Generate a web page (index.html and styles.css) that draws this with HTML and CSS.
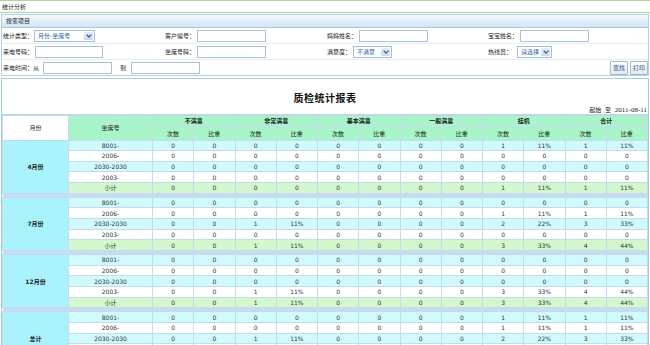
FILE: index.html
```html
<!DOCTYPE html>
<html lang="zh-CN">
<head>
<meta charset="utf-8">
<title>统计分析</title>
<link rel="stylesheet" href="styles.css">
</head>
<body>
<div class="page-title">统计分析</div>

<div class="search">
  <div class="search-head">搜索项目</div>
  <div class="search-grid">
    <div class="field"><span class="lbl">统计类型：</span><div class="sel sel-type"><span class="sel-val">月份-坐席号</span><span class="sel-arrow"><svg width="6" height="4" viewBox="0 0 6 4"><polyline points="0.6,0.6 3,3 5.4,0.6" fill="none" stroke="#3d5e9c" stroke-width="1.3"/></svg></span></div></div>
    <div class="field"><span class="lbl">客户编号：</span><input class="inp" type="text"></div>
    <div class="field"><span class="lbl">妈妈姓名：</span><input class="inp" type="text"></div>
    <div class="field"><span class="lbl">宝宝姓名：</span><input class="inp" type="text"></div>

    <div class="field"><span class="lbl">来电号码：</span><input class="inp inp-phone" type="text"></div>
    <div class="field"><span class="lbl">坐席号码：</span><input class="inp" type="text"></div>
    <div class="field"><span class="lbl">满意度：</span><div class="sel sel-sat"><span class="sel-val">不满意</span><span class="sel-arrow"><svg width="6" height="4" viewBox="0 0 6 4"><polyline points="0.6,0.6 3,3 5.4,0.6" fill="none" stroke="#3d5e9c" stroke-width="1.3"/></svg></span></div></div>
    <div class="field"><span class="lbl">热线员：</span><div class="sel sel-op"><span class="sel-val">请选择</span><span class="sel-arrow"><svg width="6" height="4" viewBox="0 0 6 4"><polyline points="0.6,0.6 3,3 5.4,0.6" fill="none" stroke="#3d5e9c" stroke-width="1.3"/></svg></span></div></div>
  </div>
  <div class="search-row3">
    <div class="field"><span class="lbl">来电时间：从</span><input class="inp inp-from" type="text"><span class="lbl lbl-to">到</span><input class="inp" type="text"></div>
    <div class="btns"><button class="btn btn-find">查找</button><button class="btn">打印</button></div>
  </div>
</div>

<div class="report">
  <div class="report-title">质检统计报表</div>
  <div class="report-date">起始&nbsp; 至&nbsp; <span class="date">2011-08-11</span></div>
  <table class="stat">
    <colgroup>
      <col class="c-month"><col class="c-seat">
      <col><col><col><col><col><col><col><col><col><col><col><col>
    </colgroup>
    <thead>
      <tr class="h1">
        <th rowspan="2" class="hm">月份</th>
        <th rowspan="2" class="hg">坐席号</th>
        <th colspan="2" class="hg b">不满意</th>
        <th colspan="2" class="hg b">非常满意</th>
        <th colspan="2" class="hg b">基本满意</th>
        <th colspan="2" class="hg b">一般满意</th>
        <th colspan="2" class="hg b">挂机</th>
        <th colspan="2" class="hg b">合计</th>
      </tr>
      <tr class="h2">
        <th class="hg">次数</th><th class="hg">比重</th>
        <th class="hg">次数</th><th class="hg">比重</th>
        <th class="hg">次数</th><th class="hg">比重</th>
        <th class="hg">次数</th><th class="hg">比重</th>
        <th class="hg">次数</th><th class="hg">比重</th>
        <th class="hg">次数</th><th class="hg">比重</th>
      </tr>
    </thead>
    <tbody>
      <tr class="r c"><td rowspan="5" class="mon">4月份</td><td>8001-</td><td>0</td><td>0</td><td>0</td><td>0</td><td>0</td><td>0</td><td>0</td><td>0</td><td>1</td><td>11%</td><td>1</td><td>11%</td></tr>
      <tr class="r w"><td>2006-</td><td>0</td><td>0</td><td>0</td><td>0</td><td>0</td><td>0</td><td>0</td><td>0</td><td>0</td><td>0</td><td>0</td><td>0</td></tr>
      <tr class="r c"><td>2030-2030</td><td>0</td><td>0</td><td>0</td><td>0</td><td>0</td><td>0</td><td>0</td><td>0</td><td>0</td><td>0</td><td>0</td><td>0</td></tr>
      <tr class="r w"><td>2003-</td><td>0</td><td>0</td><td>0</td><td>0</td><td>0</td><td>0</td><td>0</td><td>0</td><td>0</td><td>0</td><td>0</td><td>0</td></tr>
      <tr class="r s"><td>小计</td><td>0</td><td>0</td><td>0</td><td>0</td><td>0</td><td>0</td><td>0</td><td>0</td><td>1</td><td>11%</td><td>1</td><td>11%</td></tr>
      <tr class="sep"><td colspan="14"></td></tr>

      <tr class="r c"><td rowspan="5" class="mon">7月份</td><td>8001-</td><td>0</td><td>0</td><td>0</td><td>0</td><td>0</td><td>0</td><td>0</td><td>0</td><td>0</td><td>0</td><td>0</td><td>0</td></tr>
      <tr class="r w"><td>2006-</td><td>0</td><td>0</td><td>0</td><td>0</td><td>0</td><td>0</td><td>0</td><td>0</td><td>1</td><td>11%</td><td>1</td><td>11%</td></tr>
      <tr class="r c"><td>2030-2030</td><td>0</td><td>0</td><td>1</td><td>11%</td><td>0</td><td>0</td><td>0</td><td>0</td><td>2</td><td>22%</td><td>3</td><td>33%</td></tr>
      <tr class="r w"><td>2003-</td><td>0</td><td>0</td><td>0</td><td>0</td><td>0</td><td>0</td><td>0</td><td>0</td><td>0</td><td>0</td><td>0</td><td>0</td></tr>
      <tr class="r s"><td>小计</td><td>0</td><td>0</td><td>1</td><td>11%</td><td>0</td><td>0</td><td>0</td><td>0</td><td>3</td><td>33%</td><td>4</td><td>44%</td></tr>
      <tr class="sep"><td colspan="14"></td></tr>

      <tr class="r c"><td rowspan="5" class="mon">12月份</td><td>8001-</td><td>0</td><td>0</td><td>0</td><td>0</td><td>0</td><td>0</td><td>0</td><td>0</td><td>0</td><td>0</td><td>0</td><td>0</td></tr>
      <tr class="r w"><td>2006-</td><td>0</td><td>0</td><td>0</td><td>0</td><td>0</td><td>0</td><td>0</td><td>0</td><td>0</td><td>0</td><td>0</td><td>0</td></tr>
      <tr class="r c"><td>2030-2030</td><td>0</td><td>0</td><td>0</td><td>0</td><td>0</td><td>0</td><td>0</td><td>0</td><td>0</td><td>0</td><td>0</td><td>0</td></tr>
      <tr class="r w"><td>2003-</td><td>0</td><td>0</td><td>1</td><td>11%</td><td>0</td><td>0</td><td>0</td><td>0</td><td>3</td><td>33%</td><td>4</td><td>44%</td></tr>
      <tr class="r s"><td>小计</td><td>0</td><td>0</td><td>1</td><td>11%</td><td>0</td><td>0</td><td>0</td><td>0</td><td>3</td><td>33%</td><td>4</td><td>44%</td></tr>
      <tr class="sep"><td colspan="14"></td></tr>

      <tr class="r c"><td rowspan="5" class="mon">总计</td><td>8001-</td><td>0</td><td>0</td><td>0</td><td>0</td><td>0</td><td>0</td><td>0</td><td>0</td><td>1</td><td>11%</td><td>1</td><td>11%</td></tr>
      <tr class="r w"><td>2006-</td><td>0</td><td>0</td><td>0</td><td>0</td><td>0</td><td>0</td><td>0</td><td>0</td><td>1</td><td>11%</td><td>1</td><td>11%</td></tr>
      <tr class="r c"><td>2030-2030</td><td>0</td><td>0</td><td>1</td><td>11%</td><td>0</td><td>0</td><td>0</td><td>0</td><td>2</td><td>22%</td><td>3</td><td>33%</td></tr>
      <tr class="r w"><td>2003-</td><td>0</td><td>0</td><td>1</td><td>11%</td><td>0</td><td>0</td><td>0</td><td>0</td><td>3</td><td>33%</td><td>4</td><td>44%</td></tr>
      <tr class="r s"><td>合计</td><td>0</td><td>0</td><td>2</td><td>22%</td><td>0</td><td>0</td><td>0</td><td>0</td><td>7</td><td>78%</td><td>9</td><td>100%</td></tr>
    </tbody>
  </table>
</div>
</body>
</html>
```

FILE: styles.css
```css
* { box-sizing: border-box; }

html { overflow: hidden; }

body {
  margin: 0;
  background: #fff;
  color: #333;
  font-family: "DejaVu Sans", "Noto Sans CJK SC", sans-serif;
  font-size: 6px;
  line-height: 9px;
}

/* page title bar */
.page-title {
  height: 13px;
  border-top: 1px solid #a9d8a4;
  border-bottom: 1px solid #a9d8a4;
  padding-left: 2px;
  line-height: 11px;
  color: #222;
}

/* search panel */
.search {
  margin: 1px 1px 0;
  border: 1px solid #b2cfea;
}

.search-head {
  height: 13px;
  padding-left: 4px;
  line-height: 12px;
  background: linear-gradient(#f6fafe, #d3e5f6);
  border-bottom: 1px solid #a9c8e6;
  color: #222;
}

.search-grid {
  display: grid;
  grid-template-columns: 162px 162px 161px 1fr;
  padding-left: 1px;
}

.search-grid .field {
  height: 16px;
  border-bottom: 1px solid #e3edf8;
}

.field {
  display: flex;
  align-items: center;
  gap: 1px;
}

.lbl { white-space: nowrap; color: #222; }

.inp {
  width: 69px;
  height: 12px;
  margin: 0 0 0 1px;
  padding: 0;
  border: 1px solid #a7c3e0;
  background: #fff;
  font: inherit;
}

.inp-phone { width: 68px; }
.inp-from { margin-left: 3px; }
.lbl-to { margin: 0 3px 0 7px; }

/* fake select boxes */
.sel {
  display: flex;
  align-items: stretch;
  height: 12px;
  border: 1px solid #a1bfe0;
  background: #fff;
}

.sel-val {
  flex: 1;
  padding-left: 3px;
  line-height: 10px;
  color: #2f62a8;
  white-space: nowrap;
}

.sel-arrow {
  width: 9px;
  margin: 1px;
  display: flex;
  align-items: center;
  justify-content: center;
  background: linear-gradient(#e8f0fb, #c4d7f1);
  border-radius: 1px;
}

.sel-type { width: 61px; }
.sel-sat { width: 39px; margin-left: 1px; }
.sel-op { width: 35px; margin-left: 4px; }

.search-row3 {
  height: 15px;
  display: flex;
  align-items: center;
  justify-content: space-between;
  padding-left: 1px;
}

.btns { display: flex; gap: 2px; }

.btn {
  height: 14px;
  width: 18px;
  padding: 0;
  border: 1px solid #a5b9cd;
  border-radius: 1px;
  background: linear-gradient(#ffffff, #e2eaf3);
  color: #1f4a82;
  font: inherit;
  line-height: 12px;
}

/* report panel */
.report {
  margin: 2px 1px 0;
  border: 1px solid #a9c9e8;
}

.report-title {
  padding-top: 12px;
  height: 26px;
  line-height: 14px;
  text-align: center;
  font-family: "Noto Sans CJK SC", sans-serif;
  font-size: 10px;
  font-weight: 700;
  color: #111;
  letter-spacing: 0.5px;
}

.report-date {
  height: 9px;
  line-height: 9px;
  text-align: right;
  padding-right: 1px;
  color: #222;
  font-size: 6px;
}

.report-date .date {
  font-family: "Liberation Serif", serif;
  font-size: 7px;
}

/* statistics table */
.stat {
  width: 100%;
  table-layout: fixed;
  border-collapse: collapse;
  border-top: 2px solid #bed6ee;
}

.c-month { width: 66px; }
.c-seat { width: 84px; }

.stat th,
.stat td {
  border: 1px solid #c4daef;
  padding: 0;
  text-align: center;
  vertical-align: middle;
  font-weight: normal;
  line-height: 8px;
  white-space: nowrap;
  overflow: hidden;
}

.stat .h1 { height: 12px; }
.stat .h2 { height: 13px; }

.stat .hm { background: #fff; color: #222; }
.stat .hg { background: #a7f5c9; color: #222; }
.stat .b { font-weight: 700; }

.stat .r { height: 10.67px; }
.stat .r td { padding-top: 1px; }
.stat .c td { background: #cffbfe; }
.stat .w td { background: #fff; }
.stat .s td { background: #d2f8cb; }

.stat td.mon {
  background: #a9f4fc;
  font-weight: 700;
  color: #222;
}

.stat .sep { height: 4px; }
.stat .sep td {
  height: 4px;
  background: #c8dbf0;
  border-left: 0;
  border-right: 0;
}
```
